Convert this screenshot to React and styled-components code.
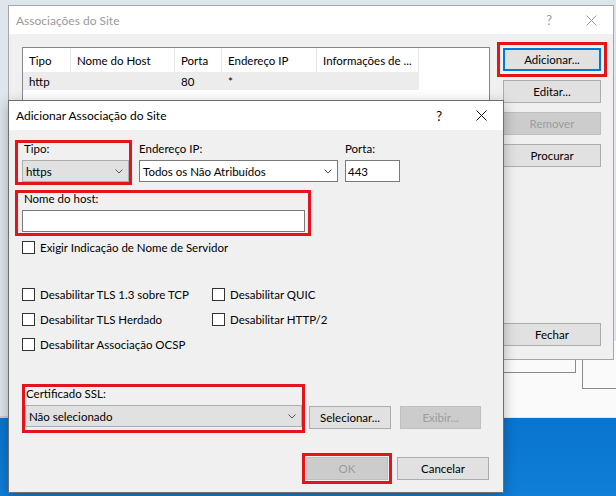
import React from "react";
import styled, { createGlobalStyle, css } from "styled-components";

const FONT = `Lato, "Noto Sans", sans-serif`;

const GlobalStyle = createGlobalStyle`
  html, body { margin: 0; padding: 0; }
  body { font-family: ${FONT}; font-size: 11.5px; color: #000; }
  * { box-sizing: border-box; }
`;

const Desktop = styled.div`
  position: relative;
  width: 616px;
  height: 496px;
  overflow: hidden;
  background: linear-gradient(
    to bottom,
    #dfe5ec 0,
    #dfe5ec 416px,
    #c9ced4 416px,
    #c9ced4 418px,
    #0a74cf 418px,
    #0f7ed7 100%
  );
`;

const Window = styled.div`
  position: absolute;
  left: ${(p) => p.$x}px;
  top: ${(p) => p.$y}px;
  width: ${(p) => p.$w}px;
  height: ${(p) => p.$h}px;
  display: flex;
  flex-direction: column;
  background: ${(p) => p.$bg || "#f0f0f0"};
  border: 1px solid ${(p) => p.$border || "#a0a0a0"};
  ${(p) =>
    p.$shadow &&
    css`
      box-shadow: 0 3px 12px rgba(0, 0, 0, 0.28);
    `}
`;

const TitleBar = styled.div`
  height: ${(p) => p.$h}px;
  flex: none;
  display: flex;
  align-items: center;
  justify-content: space-between;
  background: #fff;
  padding: 0 16px 0 7px;
`;

const TitleText = styled.span`
  font-size: 12px;
  color: ${(p) => (p.$muted ? "#9a9a9a" : "#000")};
`;

const TitleControls = styled.div`
  display: flex;
  align-items: center;
  gap: 34px;
  color: ${(p) => (p.$muted ? "#9a9a9a" : "#000")};
  font-size: 13px;
`;

const CloseGlyph = ({ color }) => (
  <svg width="11" height="11" viewBox="0 0 11 11">
    <path d="M0.5 0.5 L10.5 10.5 M10.5 0.5 L0.5 10.5" stroke={color} strokeWidth="1" fill="none" />
  </svg>
);

const Chevron = () => (
  <ChevronIcon width="8" height="5" viewBox="0 0 8 5">
    <polyline points="0.5,0.5 4,4 7.5,0.5" fill="none" stroke="#555" strokeWidth="1" />
  </ChevronIcon>
);

const ChevronIcon = styled.svg`
  flex: none;
  margin-left: auto;
  margin-right: 5px;
`;

/* ---------- back window ---------- */

const BackBody = styled.div`
  flex: 1;
  display: flex;
  gap: 13px;
  padding: 13px 12px 13px 13px;
`;

const ListView = styled.div`
  width: 468px;
  background: #fff;
  border: 1px solid #828790;
  display: flex;
  flex-direction: column;
`;

const COLS = "48px 104px 47px 95px 102px";

const HeaderRow = styled.div`
  display: grid;
  grid-template-columns: ${COLS};
  width: max-content;
  height: 24px;
`;

const HeaderCell = styled.div`
  display: flex;
  align-items: center;
  padding-left: 6px;
  border-right: 1px solid #e5e5e5;
  white-space: nowrap;
  overflow: hidden;
`;

const DataRow = styled.div`
  display: grid;
  grid-template-columns: ${COLS};
  width: max-content;
  height: 18px;
  background: #ececec;
`;

const DataCell = styled.div`
  display: flex;
  align-items: center;
  padding-left: 6px;
`;

const ButtonColumn = styled.div`
  width: 98px;
  display: flex;
  flex-direction: column;
  gap: 9px;
  padding-top: 1px;
`;

const Button = styled.button`
  height: 23px;
  width: ${(p) => (p.$w ? `${p.$w}px` : "100%")};
  flex: none;
  padding: 0;
  font-family: ${FONT};
  font-size: 11.5px;
  color: #000;
  background: #e1e1e1;
  border: 1px solid #adadad;
  border-radius: 0;
  ${(p) =>
    p.$primary &&
    css`
      border: 2px solid #0078d7;
    `}
  ${(p) =>
    p.$flag &&
    css`
      outline: 3px solid #e3141c;
      outline-offset: ${p.$flagOffset ?? 1}px;
    `}
  &:disabled {
    background: #cccccc;
    border-color: #bfbfbf;
    color: #9c9c9c;
  }
`;

const PushDown = styled.div`
  margin-top: auto;
`;

/* ---------- underlying white window ---------- */

const StubRow = styled.div`
  display: flex;
  align-items: flex-start;
  gap: 6px;
  padding-left: 10px;
`;

const StubField = styled.div`
  width: ${(p) => p.$w}px;
  height: ${(p) => p.$h}px;
  border-right: ${(p) => (p.$noRight ? "none" : "1px solid #8a8a8a")};
  border-left: ${(p) => (p.$left ? "1px solid #8a8a8a" : "none")};
  border-bottom: 1px solid #8a8a8a;
`;

/* ---------- front dialog ---------- */

const FrontBody = styled.div`
  flex: 1;
  display: flex;
  flex-direction: column;
  padding: 10px 14px 0 6px;
`;

const FieldRow = styled.div`
  display: flex;
  align-items: flex-start;
  gap: 7px;
`;

const Highlight = styled.div`
  width: ${(p) => p.$w}px;
  border: 3px solid #e3141c;
  padding: ${(p) => p.$pad};
  margin: ${(p) => p.$m || 0};
  display: flex;
  flex-direction: column;
  flex: none;
`;

const FieldGroup = styled.div`
  display: flex;
  flex-direction: column;
  margin-top: 3px;
`;

const Label = styled.div`
  height: 17px;
  line-height: 12px;
  padding-left: ${(p) => p.$indent || 0}px;
  white-space: nowrap;
`;

const Select = styled.div`
  width: ${(p) => p.$w}px;
  height: 22px;
  display: flex;
  align-items: center;
  padding-left: 3px;
  white-space: nowrap;
  background: ${(p) => (p.$gray ? "#e1e1e1" : "#fff")};
  border: 1px solid ${(p) => (p.$gray ? "#adadad" : "#7a7a7a")};
`;

const TextInput = styled.div`
  width: ${(p) => p.$w}px;
  height: 22px;
  display: flex;
  align-items: center;
  padding-left: 2px;
  background: #fff;
  border: 1px solid #7a7a7a;
`;

const CheckRow = styled.label`
  display: flex;
  align-items: center;
  gap: 5px;
  height: 16px;
  white-space: nowrap;
  margin: ${(p) => p.$m || 0};
`;

const Box = styled.span`
  width: 13px;
  height: 13px;
  flex: none;
  background: #fff;
  border: 1px solid #333;
`;

const CheckGrid = styled.div`
  display: grid;
  grid-template-columns: 190px auto;
  row-gap: 9px;
  margin: 31px 0 0 7px;
`;

const CertRow = styled.div`
  display: flex;
  align-items: flex-start;
  margin: 32px 0 0 7px;
`;

const SideButtons = styled.div`
  display: flex;
  gap: 9px;
  margin: 22px 0 0 4px;
`;

const Footer = styled.div`
  display: flex;
  justify-content: flex-end;
  gap: 9px;
  margin-top: 24px;
`;

const Check = ({ children, m }) => (
  <CheckRow $m={m}>
    <Box />
    <span>{children}</span>
  </CheckRow>
);

export default function App() {
  return (
    <>
      <GlobalStyle />
      <Desktop>
        {/* window below the site bindings dialog */}
        <Window $x={330} $y={340} $w={290} $h={78} $bg="#fafafa" $border="#e6e6e6">
          <StubRow>
            <StubField $w={256} $h={32} />
            <StubField $w={40} $h={48} $left $noRight />
          </StubRow>
        </Window>

        {/* Site bindings dialog */}
        <Window $x={8} $y={5} $w={606} $h={355} $border="#a6a6a6">
          <TitleBar $h={28}>
            <TitleText $muted>Associações do Site</TitleText>
            <TitleControls $muted>
              <span>?</span>
              <CloseGlyph color="#9a9a9a" />
            </TitleControls>
          </TitleBar>
          <BackBody>
            <ListView>
              <HeaderRow>
                <HeaderCell>Tipo</HeaderCell>
                <HeaderCell>Nome do Host</HeaderCell>
                <HeaderCell>Porta</HeaderCell>
                <HeaderCell>Endereço IP</HeaderCell>
                <HeaderCell>Informações de ...</HeaderCell>
              </HeaderRow>
              <DataRow>
                <DataCell>http</DataCell>
                <DataCell />
                <DataCell>80</DataCell>
                <DataCell>*</DataCell>
                <DataCell />
              </DataRow>
            </ListView>
            <ButtonColumn>
              <Button $primary $flag $flagOffset={3}>Adicionar...</Button>
              <Button>Editar...</Button>
              <Button disabled>Remover</Button>
              <Button>Procurar</Button>
              <PushDown />
              <Button>Fechar</Button>
            </ButtonColumn>
          </BackBody>
        </Window>

        {/* Add site binding dialog */}
        <Window $x={8} $y={100} $w={496} $h={393} $border="#6f6f6f" $shadow>
          <TitleBar $h={29}>
            <TitleText>Adicionar Associação do Site</TitleText>
            <TitleControls>
              <span>?</span>
              <CloseGlyph color="#111" />
            </TitleControls>
          </TitleBar>
          <FrontBody>
            <FieldRow>
              <Highlight $w={117} $pad="0 0 0 4px">
                <Label $indent={2}>Tipo:</Label>
                <Select $gray $w={107}>
                  https
                  <Chevron />
                </Select>
              </Highlight>
              <FieldGroup>
                <Label>Endereço IP:</Label>
                <Select $w={199}>
                  Todos os Não Atribuídos
                  <Chevron />
                </Select>
              </FieldGroup>
              <FieldGroup>
                <Label>Porta:</Label>
                <TextInput $w={55}>443</TextInput>
              </FieldGroup>
            </FieldRow>

            <Highlight $w={296} $pad="0 3px 1px 4px" $m="5px 0 0 0">
              <Label $indent={2}>Nome do host:</Label>
              <TextInput $w={283} />
            </Highlight>

            <Check m="3px 0 0 7px">Exigir Indicação de Nome de Servidor</Check>

            <CheckGrid>
              <Check>Desabilitar TLS 1.3 sobre TCP</Check>
              <Check>Desabilitar QUIC</Check>
              <Check>Desabilitar TLS Herdado</Check>
              <Check>Desabilitar HTTP/2</Check>
              <Check>Desabilitar Associação OCSP</Check>
            </CheckGrid>

            <CertRow>
              <Highlight $w={283} $pad="1px 0 3px 0">
                <Label $indent={1}>Certificado SSL:</Label>
                <Select $gray $w={277}>
                  Não selecionado
                  <Chevron />
                </Select>
              </Highlight>
              <SideButtons>
                <Button $w={82}>Selecionar...</Button>
                <Button $w={81} disabled>Exibir...</Button>
              </SideButtons>
            </CertRow>

            <Footer>
              <Button $w={82} disabled $flag $flagOffset={1}>OK</Button>
              <Button $w={92}>Cancelar</Button>
            </Footer>
          </FrontBody>
        </Window>
      </Desktop>
    </>
  );
}
